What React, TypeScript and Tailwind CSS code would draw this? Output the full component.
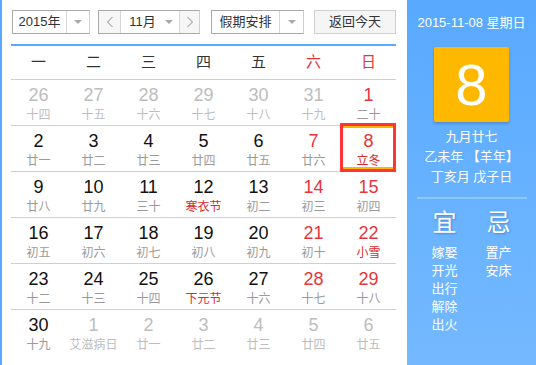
import React from 'react';

type Day = {
	d: number;
	l: string;
	dim?: boolean;
	red?: boolean;
	lred?: boolean;
	sel?: boolean;
};

const weekdays = ['一', '二', '三', '四', '五', '六', '日'];

const rows: Day[][] = [
	[
		{ d: 26, l: '十四', dim: true },
		{ d: 27, l: '十五', dim: true },
		{ d: 28, l: '十六', dim: true },
		{ d: 29, l: '十七', dim: true },
		{ d: 30, l: '十八', dim: true },
		{ d: 31, l: '十九', dim: true },
		{ d: 1, l: '二十', red: true },
	],
	[
		{ d: 2, l: '廿一' },
		{ d: 3, l: '廿二' },
		{ d: 4, l: '廿三' },
		{ d: 5, l: '廿四' },
		{ d: 6, l: '廿五' },
		{ d: 7, l: '廿六', red: true },
		{ d: 8, l: '立冬', red: true, lred: true, sel: true },
	],
	[
		{ d: 9, l: '廿八' },
		{ d: 10, l: '廿九' },
		{ d: 11, l: '三十' },
		{ d: 12, l: '寒衣节', lred: true },
		{ d: 13, l: '初二' },
		{ d: 14, l: '初三', red: true },
		{ d: 15, l: '初四', red: true },
	],
	[
		{ d: 16, l: '初五' },
		{ d: 17, l: '初六' },
		{ d: 18, l: '初七' },
		{ d: 19, l: '初八' },
		{ d: 20, l: '初九' },
		{ d: 21, l: '初十', red: true },
		{ d: 22, l: '小雪', red: true, lred: true },
	],
	[
		{ d: 23, l: '十二' },
		{ d: 24, l: '十三' },
		{ d: 25, l: '十四' },
		{ d: 26, l: '下元节', lred: true },
		{ d: 27, l: '十六' },
		{ d: 28, l: '十七', red: true },
		{ d: 29, l: '十八', red: true },
	],
	[
		{ d: 30, l: '十九' },
		{ d: 1, l: '艾滋病日', dim: true },
		{ d: 2, l: '廿一', dim: true },
		{ d: 3, l: '廿二', dim: true },
		{ d: 4, l: '廿三', dim: true },
		{ d: 5, l: '廿四', dim: true },
		{ d: 6, l: '廿五', dim: true },
	],
];

const good = ['嫁娶', '开光', '出行', '解除', '出火'];
const bad = ['置产', '安床'];

const Caret = () => (
	<svg width="8" height="5" viewBox="0 0 8 5">
		<path d="M0 0 L8 0 L4 4 Z" fill="#a8a8a8" />
	</svg>
);

const Chevron = ({ dir }: { dir: 'left' | 'right' }) => (
	<svg width="8" height="12" viewBox="0 0 8 12">
		<path
			d={dir === 'left' ? 'M6.5 1 L1.5 6 L6.5 11' : 'M1.5 1 L6.5 6 L1.5 11'}
			fill="none"
			stroke="#8a8a8a"
			strokeWidth="1"
		/>
	</svg>
);

const Cell = ({ day }: { day: Day }) => {
	const numColor = day.dim ? 'text-[#bdbdbd]' : day.red ? 'text-[#e8333a]' : 'text-[#111]';
	const lunarColor = day.lred ? 'text-[#e02828]' : day.dim ? 'text-[#bdbdbd]' : 'text-[#9a9a9a]';
	return (
		<div className="relative flex flex-col items-center pt-[5px]">
			{day.sel && (
				<div className="absolute -top-[3px] -left-[1px] right-0 -bottom-[1px] z-10 border-[3px] border-[#ff3535]">
					<div className="h-full border-y-2 border-[#ffb600]" />
				</div>
			)}
			<div className={`text-[18px] leading-[20px] ${numColor}`}>{day.d}</div>
			<div className={`mt-[2px] text-[12px] leading-[16px] ${lunarColor}`}>{day.l}</div>
		</div>
	);
};

const App = () => {
	return (
		<div className="flex w-[536px] h-[365px] overflow-hidden bg-white border-l-2 border-[#5aa9ff] font-['Liberation_Sans','Noto_Sans_CJK_SC',sans-serif]">
			<div className="w-[405px] shrink-0">
				{/* controls */}
				<div className="flex items-center h-[24px] mt-[10px] ml-[10px] text-[13px] text-[#333]">
					<div className="flex h-full w-[78px] border border-[#a9a9a9] border-r-[#cfcfcf]">
						<div className="flex flex-1 items-center justify-center border-r border-[#d6d6d6]">2015年</div>
						<div className="flex w-[22px] items-center justify-center">
							<Caret />
						</div>
					</div>
					<div className="flex h-full w-[102px] ml-[8px] border border-[#a9a9a9] border-r-[#cfcfcf]">
						<div className="flex w-[22px] items-center justify-center bg-[#f6f6f6] border-r border-[#d6d6d6]">
							<Chevron dir="left" />
						</div>
						<div className="flex flex-1 items-center justify-center gap-[9px] pl-[2px]">
							<span>11月</span>
							<Caret />
						</div>
						<div className="flex w-[20px] items-center justify-center bg-[#f6f6f6] border-l border-[#d6d6d6]">
							<Chevron dir="right" />
						</div>
					</div>
					<div className="flex h-full w-[93px] ml-[11px] border border-[#a9a9a9] border-r-[#cfcfcf]">
						<div className="flex flex-1 items-center justify-center border-r border-[#d6d6d6]">假期安排</div>
						<div className="flex w-[23px] items-center justify-center">
							<Caret />
						</div>
					</div>
					<button className="flex h-full w-[82px] ml-[10px] items-center justify-center border border-[#d0d0d0] bg-[#f5f5f5] text-[#333]">
						返回今天
					</button>
				</div>

				{/* calendar grid */}
				<div className="ml-[9px] mt-[10px] w-[385px] border-t-2 border-[#5aa9ff]">
					<div className="grid grid-cols-7 h-[33px] items-center text-[15px]">
						{weekdays.map((w, i) => (
							<div key={w} className={`text-center ${i >= 5 ? 'text-[#e8333a]' : 'text-[#333]'}`}>
								{w}
							</div>
						))}
					</div>
					{rows.map((row, ri) => (
						<div key={ri} className="grid grid-cols-7 h-[46px] border-t border-[#cfcfcf]">
							{row.map((day, di) => (
								<Cell key={di} day={day} />
							))}
						</div>
					))}
				</div>
			</div>

			{/* side panel */}
			<div className="flex flex-col items-center w-[129px] shrink-0 bg-gradient-to-b from-[#58a9ff] to-[#74b9ff] text-white">
				<div className="mt-[14px] text-[13px] leading-[18px]">2015-11-08 星期日</div>
				<div className="flex items-center justify-center w-[75px] h-[75px] mt-[15px] rounded-[2px] bg-[#ffb800] shadow-[0_2px_3px_rgba(0,0,0,0.18)] text-[58px] leading-none">
					8
				</div>
				<div className="mt-[5px] text-[13px] leading-[20px] text-center">
					<div>九月廿七</div>
					<div>乙未年 【羊年】</div>
					<div>丁亥月 戊子日</div>
				</div>
				<div className="w-[110px] h-[2px] mt-[10px] bg-[#8ec6ff]" />
				<div className="flex w-[108px] mt-[10px]">
					<div className="flex flex-col items-center w-[54px]">
						<div className="text-[24px] leading-[28px] [text-shadow:1px_1px_2px_rgba(0,40,120,0.3)]">宜</div>
						<div className="mt-[7px] text-[13px] leading-[18px]">
							{good.map((g) => (
								<div key={g}>{g}</div>
							))}
						</div>
					</div>
					<div className="flex flex-col items-center w-[54px]">
						<div className="text-[24px] leading-[28px] [text-shadow:1px_1px_2px_rgba(0,40,120,0.3)]">忌</div>
						<div className="mt-[7px] text-[13px] leading-[18px]">
							{bad.map((b) => (
								<div key={b}>{b}</div>
							))}
						</div>
					</div>
				</div>
			</div>
		</div>
	);
};

export default App;
